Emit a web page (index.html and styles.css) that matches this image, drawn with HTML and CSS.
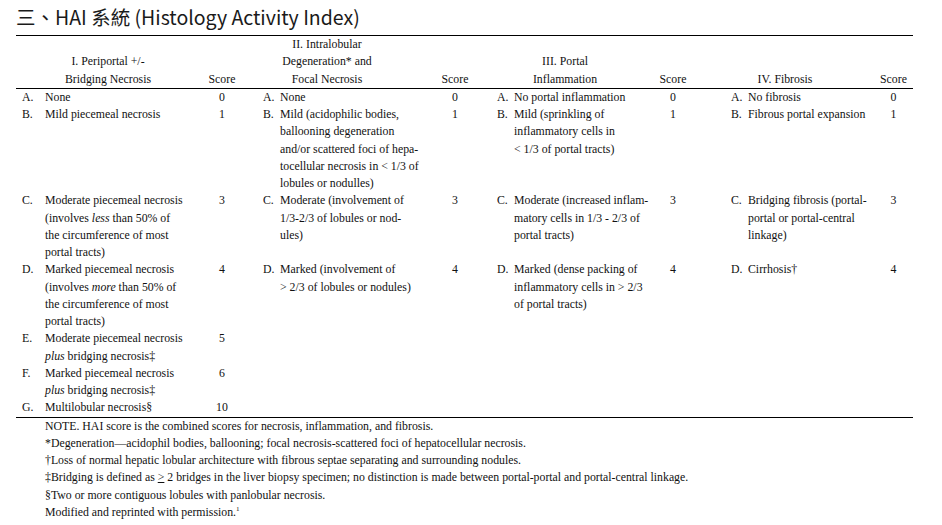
FILE: index.html
```html
<!DOCTYPE html>
<html lang="zh-Hant">
<head>
<meta charset="utf-8">
<title>HAI 系統</title>
<link rel="stylesheet" href="styles.css">
</head>
<body>
<div class="page">
  <h1 class="title">三、HAI 系統 (Histology Activity Index)</h1>
  <table class="hai">
    <colgroup>
      <col class="w-i1"><col class="w-s1">
      <col class="w-i2"><col class="w-s2">
      <col class="w-i3"><col class="w-s3">
      <col class="w-i4"><col class="w-s4">
    </colgroup>
    <thead>
      <tr>
        <th class="h h1">I. Periportal +/-<br>Bridging Necrosis</th>
        <th class="h">Score</th>
        <th class="h h2">II. Intralobular<br>Degeneration* and<br>Focal Necrosis</th>
        <th class="h">Score</th>
        <th class="h">III. Portal<br>Inflammation</th>
        <th class="h">Score</th>
        <th class="h">IV. Fibrosis</th>
        <th class="h">Score</th>
      </tr>
    </thead>
    <tbody>
      <tr>
        <td class="c1"><div class="it"><span class="lb lb1">A.</span><span>None</span></div></td>
        <td class="sc">0</td>
        <td class="c2"><div class="it"><span class="lb">A.</span><span>None</span></div></td>
        <td class="sc">0</td>
        <td class="c3"><div class="it"><span class="lb">A.</span><span>No portal inflammation</span></div></td>
        <td class="sc">0</td>
        <td class="c4"><div class="it"><span class="lb">A.</span><span>No fibrosis</span></div></td>
        <td class="sc">0</td>
      </tr>
      <tr>
        <td class="c1"><div class="it"><span class="lb lb1">B.</span><span>Mild piecemeal necrosis</span></div></td>
        <td class="sc">1</td>
        <td class="c2"><div class="it"><span class="lb">B.</span><span>Mild (acidophilic bodies,<br>ballooning degeneration<br>and/or scattered foci of hepa-<br>tocellular necrosis in &lt; 1/3 of<br>lobules or nodulles)</span></div></td>
        <td class="sc">1</td>
        <td class="c3"><div class="it"><span class="lb">B.</span><span>Mild (sprinkling of<br>inflammatory cells in<br>&lt; 1/3 of portal tracts)</span></div></td>
        <td class="sc">1</td>
        <td class="c4"><div class="it"><span class="lb">B.</span><span>Fibrous portal expansion</span></div></td>
        <td class="sc">1</td>
      </tr>
      <tr>
        <td class="c1"><div class="it"><span class="lb lb1">C.</span><span>Moderate piecemeal necrosis<br>(involves <i>less</i> than 50% of<br>the circumference of most<br>portal tracts)</span></div></td>
        <td class="sc">3</td>
        <td class="c2"><div class="it"><span class="lb">C.</span><span>Moderate (involvement of<br>1/3-2/3 of lobules or nod-<br>ules)</span></div></td>
        <td class="sc">3</td>
        <td class="c3"><div class="it"><span class="lb">C.</span><span>Moderate (increased inflam-<br>matory cells in 1/3 - 2/3 of<br>portal tracts)</span></div></td>
        <td class="sc">3</td>
        <td class="c4"><div class="it"><span class="lb">C.</span><span>Bridging fibrosis (portal-<br>portal or portal-central<br>linkage)</span></div></td>
        <td class="sc">3</td>
      </tr>
      <tr>
        <td class="c1"><div class="it"><span class="lb lb1">D.</span><span>Marked piecemeal necrosis<br>(involves <i>more</i> than 50% of<br>the circumference of most<br>portal tracts)</span></div></td>
        <td class="sc">4</td>
        <td class="c2"><div class="it"><span class="lb">D.</span><span>Marked (involvement of<br>&gt; 2/3 of lobules or nodules)</span></div></td>
        <td class="sc">4</td>
        <td class="c3"><div class="it"><span class="lb">D.</span><span>Marked (dense packing of<br>inflammatory cells in &gt; 2/3<br>of portal tracts)</span></div></td>
        <td class="sc">4</td>
        <td class="c4"><div class="it"><span class="lb">D.</span><span>Cirrhosis†</span></div></td>
        <td class="sc">4</td>
      </tr>
      <tr>
        <td class="c1"><div class="it"><span class="lb lb1">E.</span><span>Moderate piecemeal necrosis<br><i>plus</i> bridging necrosis‡</span></div></td>
        <td class="sc">5</td>
        <td></td><td></td><td></td><td></td><td></td><td></td>
      </tr>
      <tr>
        <td class="c1"><div class="it"><span class="lb lb1">F.</span><span>Marked piecemeal necrosis<br><i>plus</i> bridging necrosis‡</span></div></td>
        <td class="sc">6</td>
        <td></td><td></td><td></td><td></td><td></td><td></td>
      </tr>
      <tr class="last">
        <td class="c1"><div class="it"><span class="lb lb1">G.</span><span>Multilobular necrosis§</span></div></td>
        <td class="sc">10</td>
        <td></td><td></td><td></td><td></td><td></td><td></td>
      </tr>
    </tbody>
  </table>
  <div class="notes">
    <p>NOTE. HAI score is the combined scores for necrosis, inflammation, and fibrosis.</p>
    <p>*Degeneration—acidophil bodies, ballooning; focal necrosis-scattered foci of hepatocellular necrosis.</p>
    <p>†Loss of normal hepatic lobular architecture with fibrous septae separating and surrounding nodules.</p>
    <p>‡Bridging is defined as <span class="ge">&gt;</span> 2 bridges in the liver biopsy specimen; no distinction is made between portal-portal and portal-central linkage.</p>
    <p>§Two or more contiguous lobules with panlobular necrosis.</p>
    <p>Modified and reprinted with permission.<sup class="ref">1</sup></p>
  </div>
</div>
</body>
</html>
```

FILE: styles.css
```css
html, body {
  margin: 0;
  padding: 0;
  background: #ffffff;
}

.page {
  padding: 0 29px 0 16px;
}

.title {
  margin: 3px 0 0 0;
  font-family: "Noto Sans CJK TC", "Noto Sans", sans-serif;
  font-weight: 400;
  font-size: 19.5px;
  line-height: 28px;
  color: #1a1a1a;
  height: 32px;
}

.hai {
  width: 897px;
  border-collapse: collapse;
  table-layout: fixed;
  font-family: "Liberation Serif", "Times New Roman", serif;
  font-size: 11.8px;
  line-height: 17.25px;
  color: #111;
  border-top: 1px solid #000;
  border-bottom: 1px solid #000;
}

.w-i1 { width: 184px; }
.w-s1 { width: 44px; }
.w-i2 { width: 186px; }
.w-s2 { width: 50px; }
.w-i3 { width: 170px; }
.w-s3 { width: 46px; }
.w-i4 { width: 178px; }
.w-s4 { width: 39px; }

.hai th,
.hai td {
  padding: 0;
  vertical-align: top;
}

.hai thead th {
  font-weight: 400;
  text-align: center;
  vertical-align: bottom;
  border-bottom: 1px solid #000;
  white-space: nowrap;
}

.hai .h2 {
  padding-right: 20px;
}

.hai .sc {
  text-align: center;
}

.c1 { padding-left: 6px !important; }
.c2 { padding-left: 19px !important; }
.c3 { padding-left: 17px !important; }
.c4 { padding-left: 35px !important; }

.it {
  display: flex;
  white-space: nowrap;
}

.lb {
  flex: 0 0 17px;
}

.lb1 {
  flex-basis: 23px;
}

.notes {
  padding-left: 29px;
  font-family: "Liberation Serif", "Times New Roman", serif;
  font-size: 11.8px;
  line-height: 17.25px;
  color: #111;
}

.notes p {
  margin: 0;
  white-space: nowrap;
}

.ge {
  text-decoration: underline;
}

.ref {
  font-size: 7px;
  line-height: 0;
  vertical-align: 5px;
}
```
